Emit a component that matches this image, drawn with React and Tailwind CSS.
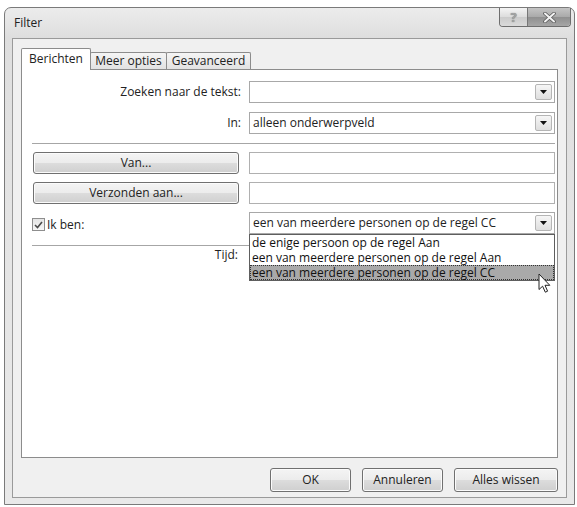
import React from "react";

// Vista-style push button
function Btn({ children, className }) {
  return (
    <div
      className={
        "flex items-center justify-center rounded-[3px] border border-[#707070] bg-[linear-gradient(#f4f4f4_0%,#ececec_48%,#dcdcdc_52%,#cfcfcf_100%)] shadow-[inset_0_0_0_1px_#fbfbfb] text-[12px] leading-none text-[#222] " +
        className
      }
    >
      {children}
    </div>
  );
}

function ArrowBox() {
  return (
    <div className="absolute right-[2px] top-[2px] w-[17px] h-[16px] border border-[#b5b5b5] rounded-[2px] bg-[linear-gradient(#f6f6f6,#dedede)] flex items-center justify-center">
      <svg width="7" height="4" viewBox="0 0 7 4">
        <path d="M0 0H7L3.5 4Z" fill="#111" />
      </svg>
    </div>
  );
}

function Combo({ value, children }) {
  return (
    <div className="relative h-[22px] border border-[#a8a8a8] bg-white flex items-center pl-[3px] text-[12px] text-[#222]">
      <span className="leading-none">{value}</span>
      <ArrowBox />
      {children}
    </div>
  );
}

function Field() {
  return <div className="h-[22px] border border-[#b0b0b0] bg-white" />;
}

function Separator({ className }) {
  return <div className={"h-[2px] border-t border-[#a6a6a6] border-b border-b-white " + className} />;
}

function Cursor() {
  return (
    <svg
      className="absolute left-[288px] top-[38px]"
      width="13"
      height="21"
      viewBox="0 0 13 21"
    >
      <path
        d="M1 1V16.5L4.6 13.2L7.3 19.2L9.6 18.2L7 12.3H11.8Z"
        fill="#fff"
        stroke="#222"
        strokeWidth="1"
        strokeLinejoin="round"
      />
    </svg>
  );
}

export default function App() {
  return (
    <div className="w-[577px] h-[507px] bg-white overflow-hidden font-['Open_Sans',sans-serif]">
      <div className="ml-[4px] mt-[7px] w-[571px] h-[498px] rounded-t-[7px] border border-[#7a7a7a] bg-[linear-gradient(180deg,#ececec_0%,#dedede_6%,#e4e4e4_40%,#e9e9e9_100%)] flex flex-col">
        {/* caption */}
        <div className="h-[30px] flex items-start">
          <span className="ml-[9px] mt-[7px] text-[12px] leading-[16px] text-[#222]">Filter</span>
          <div className="ml-auto mr-[3px] flex h-[19px] border border-t-0 border-[#6e6e6e] rounded-b-[4px] overflow-hidden">
            <div className="w-[28px] h-full bg-[linear-gradient(#f4f4f4,#dcdcdc_50%,#cbcbcb_51%,#dadada)] border-r border-[#777] flex items-center justify-center text-[13px] font-bold leading-none text-[#a4a4a4] [text-shadow:0_0_1px_#6a6a6a]">
              ?
            </div>
            <div className="w-[42px] h-full bg-[linear-gradient(#c4c4c4,#a9a9a9_50%,#8f8f8f_51%,#a6a6a6)] flex items-center justify-center">
              <svg width="13" height="11" viewBox="0 0 13 11">
                <path
                  d="M2 1.5L11 9.5M11 1.5L2 9.5"
                  stroke="#5a5a5a"
                  strokeWidth="3.6"
                  strokeLinecap="round"
                />
                <path
                  d="M2 1.5L11 9.5M11 1.5L2 9.5"
                  stroke="#f2f2f2"
                  strokeWidth="2"
                  strokeLinecap="round"
                />
              </svg>
            </div>
          </div>
        </div>

        {/* client area */}
        <div className="ml-[7px] w-[555px] h-[460px] border border-[#9a9a9a] bg-[#f0f0f0] flex flex-col">
          {/* tabs */}
          <div className="mt-[9px] ml-[8px] h-[21px] flex items-end text-[12px] text-[#222]">
            <div className="relative z-10 w-[70px] h-[22px] -mb-px border border-b-0 border-[#8c8c8c] rounded-t-[2px] bg-white flex items-center justify-center leading-none pb-[2px]">
              Berichten
            </div>
            <div className="w-[77px] h-[17px] -ml-px border border-b-0 border-[#8c8c8c] rounded-t-[2px] bg-[linear-gradient(#f5f5f5,#e2e2e2)] flex items-center justify-center leading-none">
              Meer opties
            </div>
            <div className="w-[85px] h-[17px] -ml-px border border-b-0 border-[#8c8c8c] rounded-t-[2px] bg-[linear-gradient(#f5f5f5,#e2e2e2)] flex items-center justify-center leading-none">
              Geavanceerd
            </div>
          </div>

          {/* tab page */}
          <div className="ml-[8px] w-[537px] h-[389px] border border-[#8c8c8c] bg-white pl-[10px] text-[12px] text-[#222]">
            <div className="mt-[11px] grid grid-cols-[209px_306px] gap-x-[8px] items-center">
              <div className="text-right leading-none">Zoeken naar de tekst:</div>
              <Combo value="" />
            </div>
            <div className="mt-[9px] grid grid-cols-[209px_306px] gap-x-[8px] items-center">
              <div className="text-right leading-none">In:</div>
              <Combo value="alleen onderwerpveld" />
            </div>

            <Separator className="mt-[9px] w-[523px]" />

            <div className="mt-[7px] grid grid-cols-[209px_306px] gap-x-[8px] items-center">
              <Btn className="ml-px w-[206px] h-[22px]">Van...</Btn>
              <Field />
            </div>
            <div className="mt-[8px] grid grid-cols-[209px_306px] gap-x-[8px] items-center">
              <Btn className="ml-px w-[206px] h-[22px]">Verzonden aan...</Btn>
              <Field />
            </div>

            <div className="relative z-20 mt-[8px] grid grid-cols-[209px_306px] gap-x-[8px] items-center">
              <div className="flex items-center gap-[2px] pt-[3px]">
                <div className="w-[13px] h-[13px] border border-[#8e8e8e] bg-[linear-gradient(#e4e4e4,#f6f6f6)] flex items-center justify-center">
                  <svg width="9" height="8" viewBox="0 0 9 8">
                    <path d="M1 4L3.5 6.5L8 1" fill="none" stroke="#4a4a4a" strokeWidth="1.6" />
                  </svg>
                </div>
                <span className="leading-none">Ik ben:</span>
              </div>
              <Combo value="een van meerdere personen op de regel CC">
                {/* open drop-down list */}
                <div className="absolute left-[-1px] top-[21px] w-[306px] border border-[#5e5e5e] bg-white text-[12px] text-[#111]">
                  <div className="h-[15px] pl-[2px] leading-[15px]">de enige persoon op de regel Aan</div>
                  <div className="h-[15px] pl-[2px] leading-[15px]">een van meerdere personen op de regel Aan</div>
                  <div className="h-[15px] pl-[1px] leading-[13px] bg-[#a9a9a9] border border-dotted border-[#333]">
                    een van meerdere personen op de regel CC
                  </div>
                  <Cursor />
                </div>
              </Combo>
            </div>

            <Separator className="mt-[11px] w-[523px]" />

            <div className="grid grid-cols-[209px_306px] gap-x-[8px] items-center h-[16px]">
              <div className="text-right leading-none pr-[3px]">Tijd:</div>
              <div />
            </div>
          </div>

          {/* dialog buttons */}
          <div className="ml-[8px] mt-[10px] w-[537px] flex justify-end gap-[11px]">
            <Btn className="w-[81px] h-[24px]">OK</Btn>
            <Btn className="w-[81px] h-[24px]">Annuleren</Btn>
            <Btn className="w-[104px] h-[24px]">Alles wissen</Btn>
          </div>
        </div>
      </div>
    </div>
  );
}
